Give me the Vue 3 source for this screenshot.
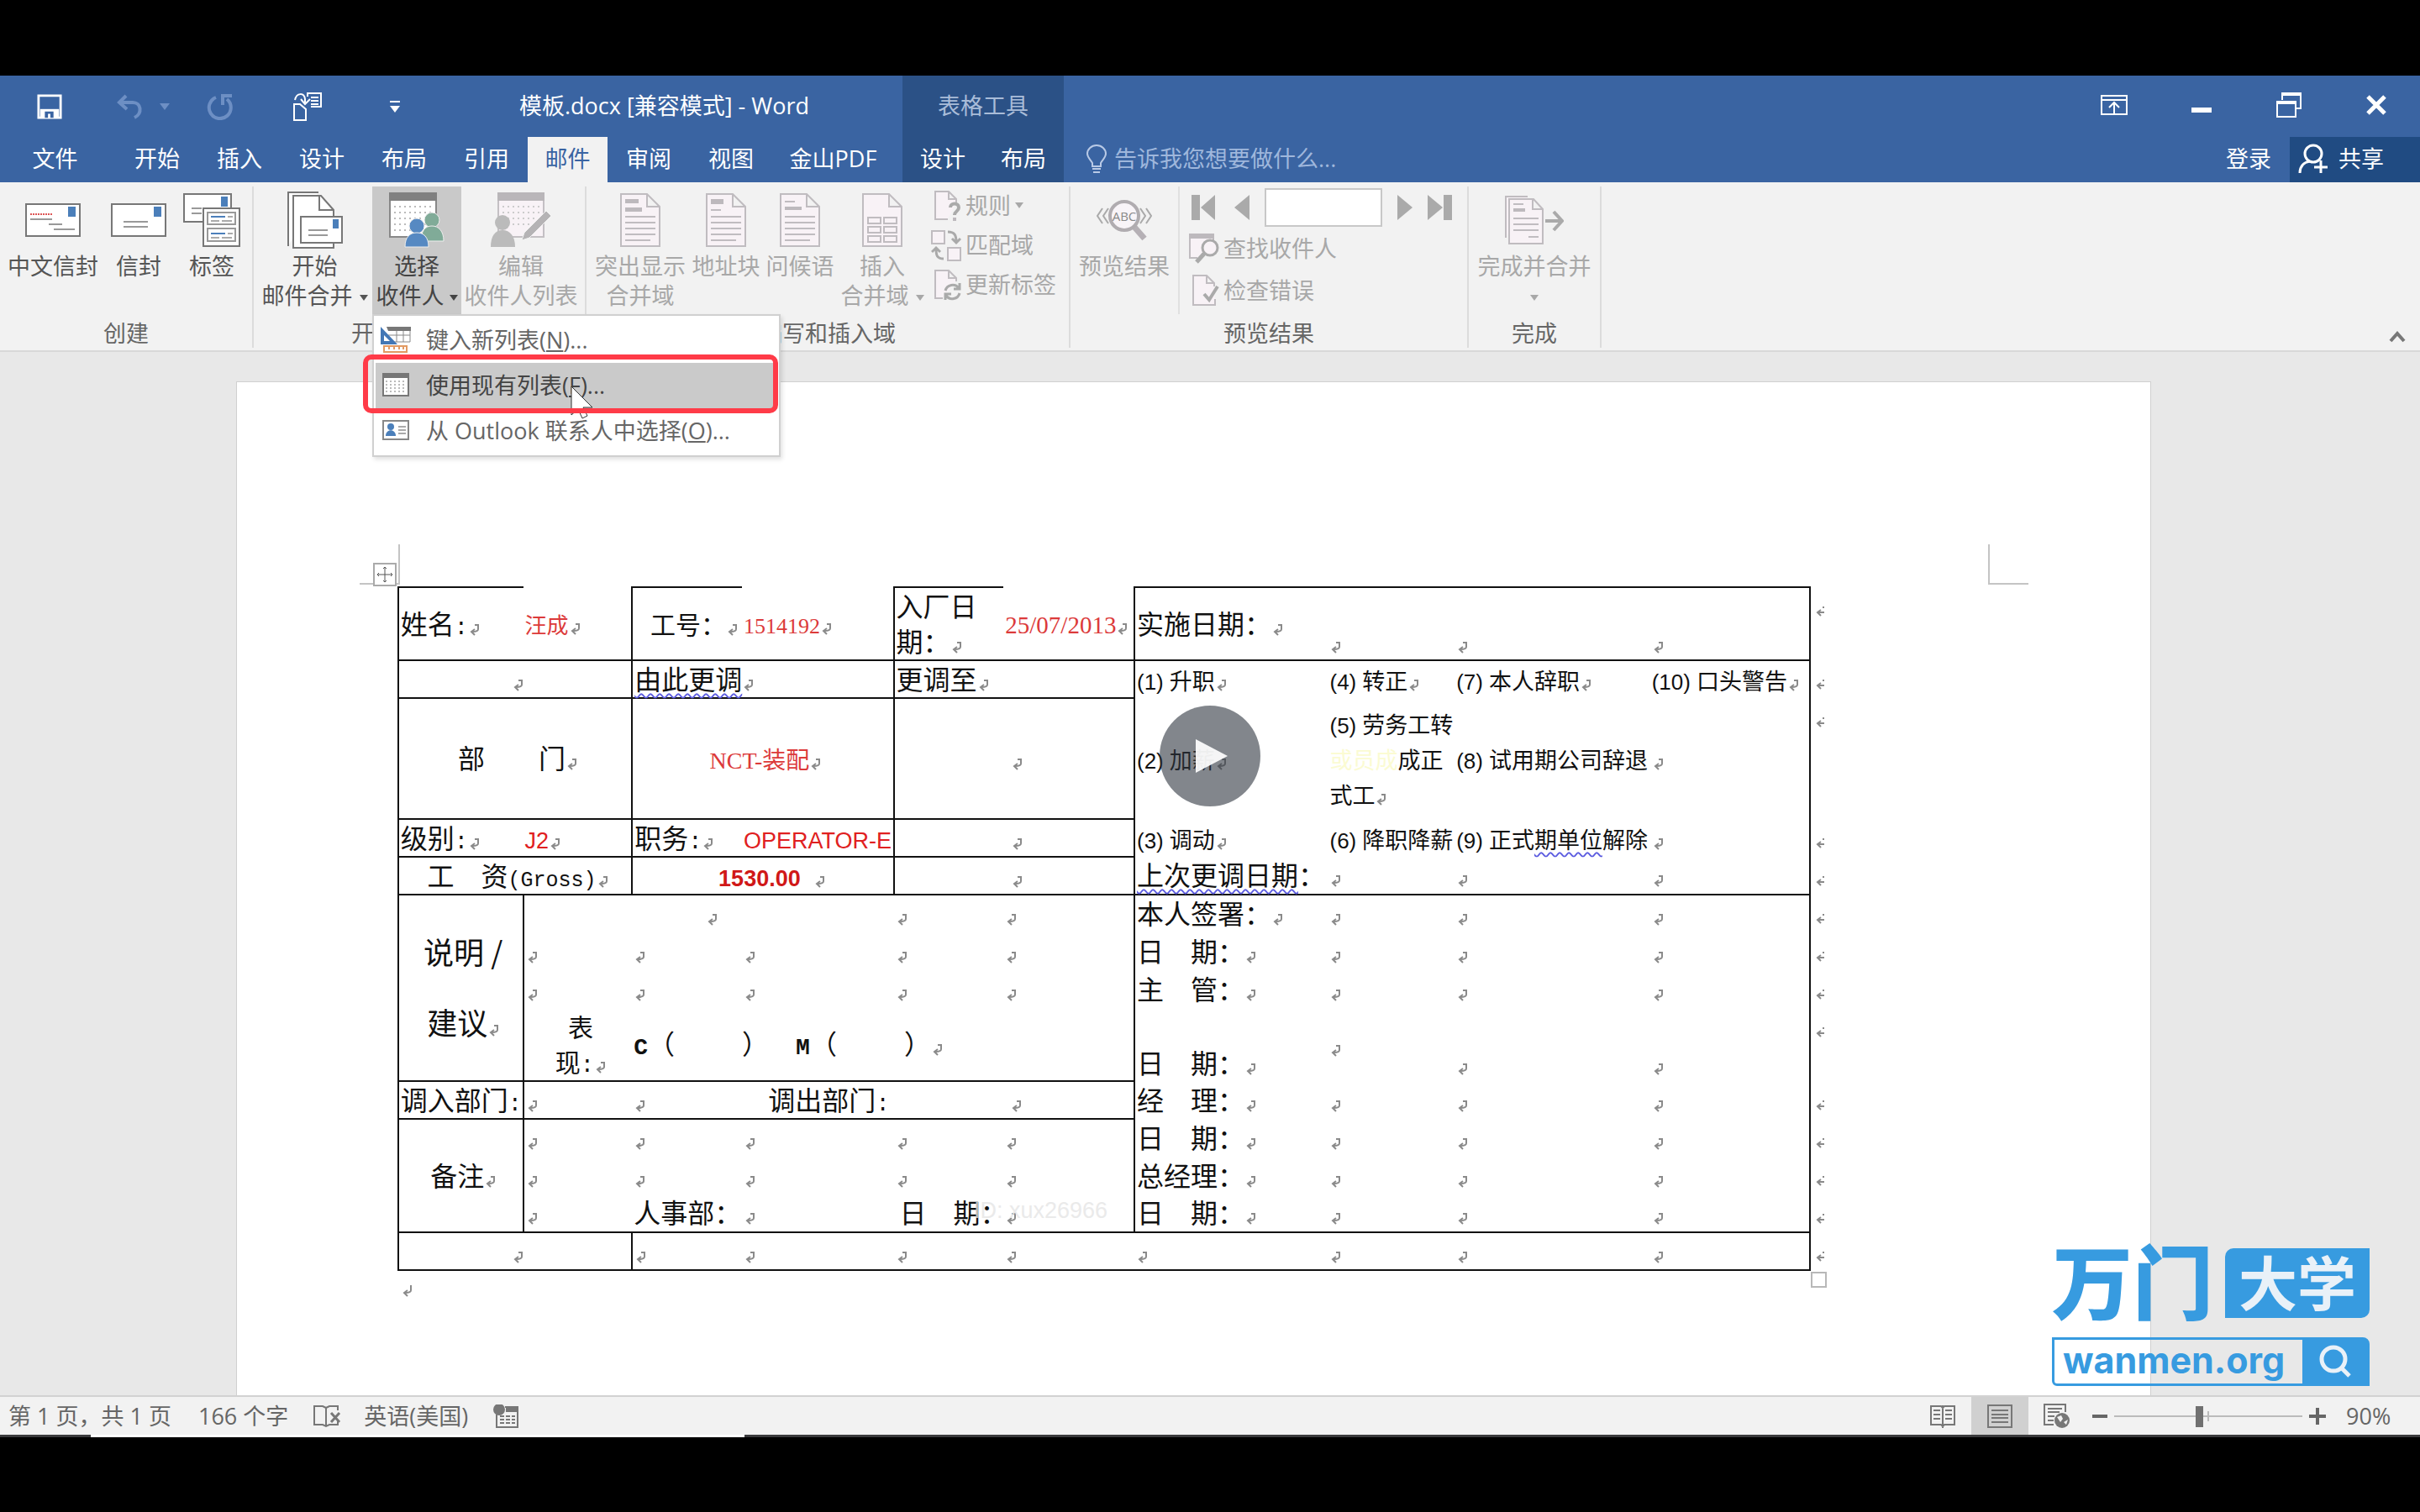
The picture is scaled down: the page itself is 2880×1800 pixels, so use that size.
<script setup>
import { ref } from 'vue'

const tabs = ['开始', '插入', '设计', '布局', '引用', '邮件', '审阅', '视图']
const record = ref('')
const zoom = ref(45)

const widths = [149, 130, 131, 181, 131, 156, 231, 151, 233, 191, 22]
const total = widths.reduce((a, b) => a + b, 0)
const cols = widths.map((w) => (w / total) * 100 + '%')

// A cell: lines of [text, style] runs, a paragraph mark unless hidden, and layout classes.
const cell = (lines, cls = '', opt = {}) => ({ lines, cls, span: 1, rows: 1, mark: true, ...opt })
const one = (text, cls, opt) => cell([[[text]]], cls, opt)
const blank = (cls = '', opt) => cell([[]], cls, opt)
const item = (n, text, cls = '', opt) => cell([[[`(${n})`, 'num'], [text, 'small']]], cls, opt)
const noMark = { mark: false }
const pair = { span: 2 }

const rows = [
  { h: 'h87', cells: [
    cell([[['姓名'], [':', 'half']]], 'bt bl bb'),
    cell([[['汪成', 'song']]], 'bb'),
    cell([[['工号：', 'mid']]], 'bt bl bb rt'),
    cell([[['1514192', 'song']]], 'bb'),
    cell([[['入厂日']], [['期：']]], 'bt bl bb'),
    cell([[['25/07/2013', 'date']]], 'bb'),
    one('实施日期：', 'bt bl bb'), blank('bt bb low'), blank('bt bb low'), blank('bt bb br low')
  ] },
  { h: 'h45', cells: [
    blank('bl bb ctr', pair),
    cell([[['由此更调', 'wave']]], 'bl bb', pair),
    one('更调至', 'bl bb', pair),
    item(1, '升职', 'bl'), item(4, '转正'), item(7, '本人辞职'), item(10, '口头警告', 'br')
  ] },
  { h: 'h144', cells: [
    one('部　　门', 'bl bb ctr', pair),
    cell([[['NCT-装配', 'dept']]], 'bl bb ctr', pair),
    blank('bl bb ctr', pair),
    item(2, '加薪', 'bl'),
    cell([[['(5)', 'num'], ['劳务工转', 'small']], [['或员成', 'small faint'], ['成正', 'small']], [['式工', 'small']]]),
    item(8, '试用期公司辞退', '', noMark), blank('br')
  ] },
  { h: 'h45', cells: [
    cell([[['级别'], [':', 'half']]], 'bl bb'),
    cell([[['J2', 'arial']]], 'bb'),
    cell([[['职务'], [':', 'half']]], 'bl bb'),
    cell([[['OPERATOR-E', 'arial']]], 'bb clip', noMark),
    blank('bl bb ctr', pair),
    item(3, '调动', 'bl'), item(6, '降职降薪', '', noMark),
    cell([[['(9)', 'num'], ['正式', 'small'], ['期单位', 'small wave'], ['解除', 'small']]], '', noMark), blank('br')
  ] },
  { h: 'h45', cells: [
    cell([[['工　资'], ['(Gross)', 'mono']]], 'bl bb ctr', pair),
    cell([[['  1530.00  ', 'arial bold']]], 'bl bb ctr', pair),
    blank('bl bb ctr', pair),
    cell([[['上次更调日期', 'wave'], ['：']]], 'bl bb', noMark), blank('bb'), blank('bb'), blank('bb br')
  ] },
  { h: 'h45', cells: [
    cell([[['说明 /', 'huge']], [['建议', 'huge']]], 'bl bb br ctr tall', { rows: 4 }),
    blank('ctr', { span: 3 }), blank(), blank(),
    one('本人签署：', 'bl'), blank(), blank(), blank('br')
  ] },
  { h: 'h45', cells: [blank(), blank(), blank(), blank(), blank(), one('日　期：', 'bl'), blank(), blank(), blank('br')] },
  { h: 'h45', cells: [blank(), blank(), blank(), blank(), blank(), one('主　管：', 'bl'), blank(), blank(), blank('br')] },
  { h: 'h87', cells: [
    cell([[['表', 'mid']], [['现', 'mid'], [':', 'half']]], 'bb ctr'),
    cell([[['C', 'heavy'], ['（\u2002\u2002\u2002\u2002\u2002）\u2002\u2002'], ['M', 'heavy'], ['（\u2002\u2002\u2002\u2002\u2002）']]], 'bb', { span: 4 }),
    one('日　期：', 'bl low'), blank(), blank('low'), blank('br low')
  ] },
  { h: 'h45', cells: [
    cell([[['调入部门'], [':', 'half']]], 'bl br bb', noMark),
    blank('bb'), blank('bb'),
    cell([[['调出部门'], [':', 'half']]], 'bb rt', noMark),
    blank('bb ctr', pair),
    one('经　理：', 'bl'), blank(), blank(), blank('br')
  ] },
  { h: 'h45', cells: [
    one('备注', 'bl br bb ctr', { rows: 3 }),
    blank(), blank(), blank(), blank(), blank(), one('日　期：', 'bl'), blank(), blank(), blank('br')
  ] },
  { h: 'h45', cells: [blank(), blank(), blank(), blank(), blank(), one('总经理：', 'bl'), blank(), blank(), blank('br')] },
  { h: 'h45', cells: [
    blank('bb'), one('人事部：', 'bb', noMark), blank('bb'), one('日　期：', 'bb inset', noMark), blank('bb'),
    one('日　期：', 'bl bb'), blank('bb'), blank('bb'), blank('bb br')
  ] },
  { h: 'h45', cells: [
    blank('bl bb ctr', pair), blank('bl bb'), blank('bb'), blank('bb'), blank('bb'), blank('bb'), blank('bb'), blank('bb'), blank('bb br')
  ] }
]
</script>

<template>
  <div class="stage">
    <div class="window">
      <header class="head">
        <div class="titlebar">
          <div class="quick">
            <button class="q q1" aria-label="保存"><svg width="30" height="30" viewBox="0 0 32 32"><path d="M2 2h28v28H2z" fill="none" stroke="#fff" stroke-width="3" /><path d="M4 19h24v11H4z" fill="#fff" /><path d="M10 22h11v8h-4v-5h-3v5h-4z" fill="#3a64a2" /></svg></button>
            <button class="q q2" aria-label="撤销"><svg width="34" height="32" viewBox="0 0 34 32"><path d="M12 3L4 11l9 8M4 11h16c10 0 12 13 2 18" fill="none" stroke="#6d8fc4" stroke-width="4" /></svg></button>
            <button class="q q3" aria-label="撤销选项"><svg width="12" height="8" viewBox="0 0 12 8"><path d="M0 0h12L6 8z" fill="#6d8fc4" /></svg></button>
            <button class="q q4" aria-label="重复"><svg width="32" height="32" viewBox="0 0 32 32"><path d="M11 5a13 13 0 1 0 13 2M19 14V3h11" fill="none" stroke="#6d8fc4" stroke-width="4" /></svg></button>
            <button class="q q5" aria-label="邮件合并"><svg width="36" height="36" viewBox="0 0 36 36" fill="none" stroke="#fff" stroke-width="2"><path d="M2 15h7l7 6v13H2zM3 10c2-9 11-9 12-1v4M10 9l5 6 6-6" /><path d="M18 6V2h16v16H22M22 7h9M22 11h9M22 15h9" /></svg></button>
            <button class="q q6" aria-label="自定义快速访问工具栏"><svg width="12" height="14" viewBox="0 0 12 14"><path d="M0 1h12" stroke="#fff" stroke-width="2" /><path d="M0 6h12L6 14z" fill="#fff" /></svg></button>
          </div>
          <h1 class="title">模板.docx [兼容模式] - Word</h1>
        </div>
        <div class="context">表格工具</div>
        <div class="controls">
          <button aria-label="功能区显示选项"><svg width="32" height="24" viewBox="0 0 32 24" fill="none" stroke="#fff" stroke-width="2"><path d="M1 1h30v22H1zM1 6h30M16 23V10M10 15l6-6 6 6" /></svg></button>
          <button aria-label="最小化"><svg width="24" height="24" viewBox="0 0 24 24"><path d="M0 15h24v6H0z" fill="#fff" /></svg></button>
          <button aria-label="还原"><svg width="30" height="30" viewBox="0 0 30 30"><path d="M7 9V1h22v18h-5M1 11h22v18H1z" fill="none" stroke="#fff" stroke-width="2" /><path d="M6 0h24v4H6zM0 10h24v4H0z" fill="#fff" /></svg></button>
          <button aria-label="关闭"><svg width="24" height="24" viewBox="0 0 24 24"><path d="M2 2l20 20M22 2L2 22" stroke="#fff" stroke-width="5" /></svg></button>
        </div>
        <nav class="tabs">
          <button class="tab file">文件</button>
          <button v-for="t in tabs" :key="t" class="tab" :class="{ active: t === '邮件' }">{{ t }}</button>
          <button class="tab wide">金山PDF</button>
        </nav>
        <nav class="tabs ctx">
          <button class="tab">设计</button>
          <button class="tab">布局</button>
        </nav>
        <div class="right">
          <label class="tell">
            <svg width="26" height="36" viewBox="0 0 26 36" fill="none" stroke="#b9cae6" stroke-width="2"><path d="M8 26v-4C5 17 2 15 2 11a11 10 0 0 1 22 0c0 4-3 6-6 11v4zM8 29h10M9 33h8" /></svg>
            <input type="text" placeholder="告诉我您想要做什么..." />
          </label>
          <button class="login">登录</button>
          <button class="share"><svg width="36" height="36" viewBox="0 0 36 36" fill="none" stroke="#fff" stroke-width="3"><ellipse cx="18" cy="12" rx="10" ry="10" /><path d="M2 35c0-8 5-13 12-14M27 20v15M19 28h16" /></svg>共享</button>
        </div>
      </header>

      <section class="ribbon">
        <div class="group g1">
          <div class="tools">
            <button class="big w126"><span class="ico"><svg width="66" height="40" viewBox="0 0 66 40"><path d="M1 1h64v38H1z" fill="#fff" stroke="#777" stroke-width="2" /><path d="M51 4h9v12h-9z" fill="#4b7fba" /><path d="M6 13h26" stroke="#d55" stroke-width="2" stroke-dasharray="2 1" /><path d="M6 19h26M28 25h16M34 31h25" stroke="#999" stroke-width="2" /></svg></span>中文信封</button>
            <button class="big w78"><span class="ico"><svg width="66" height="40" viewBox="0 0 66 40"><path d="M1 1h64v38H1z" fill="#fff" stroke="#777" stroke-width="2" /><path d="M51 4h9v12h-9z" fill="#4b7fba" /><path d="M15 22h29M15 28h29" stroke="#999" stroke-width="2" /></svg></span>信封</button>
            <button class="big w96"><span class="ico"><svg width="68" height="64" viewBox="0 0 68 64"><path d="M1 1h56v33H1z" fill="#fff" stroke="#777" stroke-width="2" /><path d="M45 4h8v12h-8z" fill="#4b7fba" /><path d="M10 18h12M10 24h12" stroke="#999" stroke-width="2" /><path d="M24 18h43v45H24z" fill="#fff" stroke="#777" stroke-width="2" /><path d="M29 23h33v14H29zM29 42h33v15H29z" fill="none" stroke="#999" stroke-width="2" /><path d="M33 28h17M33 48h17" stroke="#4b7fba" stroke-width="2" /><path d="M53 28h6M33 33h10M46 33h12M53 48h6M33 53h10M46 53h12" stroke="#aaa" stroke-width="2" /></svg></span>标签</button>
          </div>
          <div class="gname">创建</div>
        </div>
        <div class="group g2">
          <div class="tools">
            <button class="big w137"><span class="ico"><svg width="66" height="68" viewBox="0 0 66 68"><path d="M1 65V1h36" fill="#fff" stroke="#777" stroke-width="2" /><path d="M7 67V5h33l15 17v45z" fill="#fff" stroke="#777" stroke-width="2" /><path d="M38 5v17h17" fill="none" stroke="#777" stroke-width="2" /><path d="M16 30h49v31H16z" fill="#fff" stroke="#777" stroke-width="2" /><path d="M54 33h7v11h-7z" fill="#4b7fba" /><path d="M25 46h23M25 52h23" stroke="#999" stroke-width="2" /></svg></span>开始<span>邮件合并<i class="caret"></i></span></button>
            <button class="big w106 pressed"><span class="ico"><svg width="66" height="66" viewBox="0 0 66 66"><path d="M1 1h55v52H1z" fill="#fff" stroke="#888" stroke-width="2" /><path d="M0 0h57v10H0z" fill="#808080" /><path d="M6 17h46M6 24h46M6 31h46M6 38h46M6 45h30" stroke="#bbb" stroke-width="2" stroke-dasharray="2 4" /><g fill="#80ab98" stroke="#eee"><circle cx="51" cy="33" r="9" /><path d="M38 58c0-12 5-18 13-18s14 6 14 18z" /></g><g fill="#5689c2" stroke="#eee"><circle cx="33" cy="40" r="9" /><path d="M19 65c0-12 6-17 14-17s14 5 14 17z" /></g></svg></span>选择<span>收件人<i class="caret"></i></span></button>
            <button class="big w142" disabled><span class="ico"><svg width="72" height="66" viewBox="0 0 72 66"><path d="M9 1h54v52H9z" fill="#f8f2f6" stroke="#c4c0c4" stroke-width="2" /><path d="M8 0h56v10H8z" fill="#b9b6b9" /><path d="M14 17h46M14 24h46M14 31h40M14 38h36" stroke="#ccc" stroke-width="2" stroke-dasharray="2 4" /><circle cx="14" cy="36" r="9" fill="#bbb" /><path d="M0 65c0-13 5-20 14-20s15 7 15 20z" fill="#bbb" /><path d="M37 57l3-9 26-26 6 6-26 26z" fill="#b5b3b5" stroke="#f2f2f2" /></svg></span>编辑<span>收件人列表</span></button>
          </div>
          <div class="gname">开始邮件合并</div>
        </div>
        <div class="group g3">
          <div class="tools">
            <button class="big w120" disabled><span class="ico"><svg class="doc" width="48" height="64" viewBox="0 0 48 64"><path d="M1 1h31l15 15v47H1zM32 1v15h15" /><path d="M6 7h16v5H6zM6 17h20v5H6z" class="fill" /><path d="M6 28h36M6 35h36M6 42h36M6 49h36M6 56h30" /></svg></span>突出显示<span>合并域</span></button>
            <button class="big w84" disabled><span class="ico"><svg class="doc" width="48" height="64" viewBox="0 0 48 64"><path d="M1 1h31l15 15v47H1zM32 1v15h15" /><path d="M6 7h15v6H6z" class="fill" /><path d="M6 20h12M6 28h36M6 35h36M6 42h36M6 49h36M6 56h30" /></svg></span>地址块</button>
            <button class="big w92" disabled><span class="ico"><svg class="doc" width="48" height="64" viewBox="0 0 48 64"><path d="M1 1h31l15 15v47H1zM32 1v15h15" /><path d="M6 16h20v4H6z" class="fill" /><path d="M6 10h12M6 28h36M6 35h36M6 42h36M6 49h36M6 56h30" /></svg></span>问候语</button>
            <button class="big w104" disabled><span class="ico"><svg class="doc" width="48" height="64" viewBox="0 0 48 64"><path d="M1 1h31l15 15v47H1zM32 1v15h15" /><path d="M7 29h15v7H7zM26 29h15v7H26zM7 40h15v7H7zM26 40h15v7H26zM7 51h15v7H7zM26 51h15v7H26z" /></svg></span>插入<span>合并域<i class="caret"></i></span></button>
            <div class="stack">
              <button disabled><svg class="doc" width="36" height="38" viewBox="0 0 36 38"><path d="M20 35H5V2h16l9 9v4M21 2v9h9" /><path d="M23 21c0-6 10-6 10 0 0 5-5 4-5 9" fill="none" stroke="#aaa" stroke-width="4" /><path d="M26 33h4v4h-4z" class="fill" /></svg>规则<i class="caret"></i></button>
              <button disabled><svg class="doc" width="36" height="38" viewBox="0 0 36 38"><path d="M1 2h15v15H1zM20 22h15v15H20z" /><path d="M20 3c8 0 10 4 10 12M25 11l5 5 5-5M15 35c-8 0-9-4-9-12M1 27l5-5 5 5" fill="none" stroke="#aaa" stroke-width="3" /></svg>匹配域</button>
              <button disabled><svg class="doc" width="36" height="38" viewBox="0 0 36 38"><path d="M14 35H5V2h16l9 9v4M21 2v9h9" /><path d="M17 26a9 9 0 0 1 16-3M34 17v7h-7M34 29a9 9 0 0 1-16 3M17 37v-7h7" fill="none" stroke="#aaa" stroke-width="3" /></svg>更新标签</button>
            </div>
          </div>
          <div class="gname">编写和插入域</div>
        </div>
        <div class="group g4">
          <div class="tools">
            <button class="big w128" disabled><span class="ico"><svg width="68" height="50" viewBox="0 0 68 50"><path d="M44 31l14 16" stroke="#b5b0b5" stroke-width="7" /><circle cx="34" cy="20" r="17" fill="#f8f4f8" stroke="#b0acb0" stroke-width="4" /><text x="34" y="26" text-anchor="middle" font-size="15" fill="#888">ABC</text><path d="M8 11l-6 9 6 9M15 11l-6 9 6 9M60 11l6 9-6 9M53 11l6 9-6 9" fill="none" stroke="#aaa" stroke-width="2" /></svg></span>预览结果</button>
            <div class="stack nav">
              <div class="records">
                <button class="first" aria-label="首记录" disabled><svg width="29" height="30" viewBox="0 0 29 30"><path d="M0 0h10v30H0zM28 0v30L11 15z" fill="#aaa" /></svg></button>
                <button aria-label="上一记录" disabled><svg width="18" height="30" viewBox="0 0 18 30"><path d="M18 0v30L0 15z" fill="#aaa" /></svg></button>
                <input v-model="record" type="text" aria-label="记录" />
                <button aria-label="下一记录" disabled><svg width="18" height="30" viewBox="0 0 18 30"><path d="M0 0v30l18-15z" fill="#aaa" /></svg></button>
                <button aria-label="尾记录" disabled><svg width="29" height="30" viewBox="0 0 29 30"><path d="M19 0h10v30H19zM0 0v30l18-15z" fill="#aaa" /></svg></button>
              </div>
              <button disabled><svg class="doc" width="36" height="38" viewBox="0 0 36 38"><path d="M10 31H1V3h28v9" /><path d="M0 2h30v6H0z" class="fill" /><circle cx="25" cy="19" r="9" stroke="#aaa" stroke-width="3" /><path d="M18 26L9 36" stroke="#aaa" stroke-width="5" /></svg>查找收件人</button>
              <button disabled><svg class="doc" width="36" height="38" viewBox="0 0 36 38"><path d="M31 30v7H5V2h16l9 9v4M21 2v9h9" /><path d="M18 24l6 7 10-16" fill="none" stroke="#aaa" stroke-width="4" /></svg>检查错误</button>
            </div>
          </div>
          <div class="gname">预览结果</div>
        </div>
        <div class="group g5">
          <div class="tools">
            <button class="big w156" disabled><span class="ico"><svg class="doc" width="70" height="58" viewBox="0 0 70 58"><path d="M1 50V1h26" /><path d="M5 4h29l11 12v41H5zM33 4v12h12" /><path d="M10 15h14v4H10z" class="fill" /><path d="M10 10h12M10 27h30M10 34h30M10 41h30M28 49h12" /><path d="M48 30h19M58 19l10 11-10 11" fill="none" stroke="#aaa" stroke-width="4" /></svg></span>完成并合并<span class="only"><i class="caret"></i></span></button>
          </div>
          <div class="gname">完成</div>
        </div>
        <button class="collapse" aria-label="折叠功能区"><svg width="20" height="16" viewBox="0 0 20 16"><path d="M2 13l8-9 8 9" fill="none" stroke="#777" stroke-width="4" /></svg></button>

        <div class="popup">
          <ul class="menu">
            <li><button><svg width="36" height="32" viewBox="0 0 36 32"><path d="M9 2h26v17H12M9 11h26M19 4v15M27 4v15" fill="#fff" stroke="#888" stroke-width="1" /><path d="M7 1h29v5H9z" fill="#777" /><path d="M0 1l20 21H0z" fill="#4377b5" /><path d="M4 11l7 7H4z" fill="#fff" /><path d="M4 24h27v7H4z" fill="#fff" stroke="#e29a63" stroke-width="2" /><path d="M10 24v4M16 24v4M22 24v4M27 24v4" stroke="#e29a63" stroke-width="2" /></svg>键入新列表(<u>N</u>)...</button></li>
            <li><button class="hover"><svg width="36" height="32" viewBox="0 0 36 32"><path d="M3 3h30v26H3z" fill="#fff" stroke="#777" stroke-width="2" /><path d="M2 2h32v6H2z" fill="#777" /><path d="M6 12h25M6 16h25M6 20h25M6 24h25" stroke="#bbb" stroke-width="2" stroke-dasharray="2 3" /></svg>使用现有列表(<u>F</u>)...</button></li>
            <li><button><svg width="36" height="32" viewBox="0 0 36 32"><path d="M3 5h30v22H3z" fill="#fff" stroke="#888" stroke-width="2" /><circle cx="12" cy="12" r="4" fill="#4b7fba" /><path d="M6 23c0-9 12-9 12 0z" fill="#4b7fba" /><path d="M21 12h9M21 16h9M21 20h9" stroke="#aaa" stroke-width="2" /></svg>从 Outlook 联系人中选择(<u>O</u>)...</button></li>
          </ul>
          <svg class="pointer" width="30" height="42" viewBox="0 0 30 42"><path d="M2 2v34l8-7 5 11 6-3-5-10h11z" fill="#fff" stroke="#333" stroke-width="1" /></svg>
          <span class="ring"></span>
        </div>
      </section>

      <main class="desk">
        <article class="page">
          <div class="corners">
            <span class="corner left"><span class="handle"><svg width="20" height="20" viewBox="0 0 20 20"><path d="M10 1v18M1 10h18M8 3l2-2 2 2M8 17l2 2 2-2M3 8l-2 2 2 2M17 8l2 2-2 2" fill="none" stroke="#555" stroke-width="1" /></svg></span></span>
            <span class="corner end"></span>
          </div>
          <table>
            <colgroup><col v-for="(w, i) in cols" :key="i" :style="{ width: w }" /></colgroup>
            <tbody>
              <tr v-for="(r, ri) in rows" :key="ri" :class="r.h">
                <td v-for="(c, ci) in r.cells" :key="ci" :class="c.cls" :colspan="c.span" :rowspan="c.rows">
                  <div v-for="(line, li) in c.lines" :key="li" class="line"><span v-for="(seg, si) in line" :key="si" :class="seg[1]">{{ seg[0] }}</span><svg v-if="c.mark && li === c.lines.length - 1" class="mark" width="12" height="16" viewBox="0 0 12 16"><path d="M6 2h4v5c0 2-2 3-7 3M6 7l-4 3 4 4" /></svg></div>
                </td>
                <td class="endmark"><div class="line"><svg class="mark" width="12" height="16" viewBox="0 0 12 16"><path d="M10 10H3M6 7l-4 3 4 4M9 3v2" /></svg></div></td>
              </tr>
            </tbody>
          </table>
          <div class="after">
            <svg class="mark" width="12" height="16" viewBox="0 0 12 16"><path d="M10 1v6c0 2-2 3-7 3M6 7l-4 3 4 4" /></svg>
            <span class="grip"></span>
          </div>
          <span class="uid">ID: xux26966</span>
        </article>

        <div class="brand">
          <div class="row1"><strong>万门</strong><span>大学</span></div>
          <div class="row2"><span>wanmen.org</span><i><svg width="40" height="40" viewBox="0 0 40 40" fill="none" stroke="#e9f1f8" stroke-width="5"><circle cx="18" cy="17" r="14" /><path d="M27 27l10 10" /></svg></i></div>
        </div>
      </main>

      <footer class="status">
        <span>第 1 页，共 1 页</span>
        <span class="words">166 个字</span>
        <button aria-label="校对"><svg width="34" height="28" viewBox="0 0 34 28" fill="none" stroke="#777" stroke-width="2"><path d="M15 4v22M15 4l-4-2H1v22h10l4 2 4-2h10v-4M15 4l4-2h10v5" /><path d="M21 10l10 11M31 10L21 21" stroke-width="3" /></svg></button>
        <span class="lang">英语(美国)</span>
        <button aria-label="录制宏"><svg width="30" height="28" viewBox="0 0 30 28"><path d="M4 12v15h25V3H14" fill="none" stroke="#777" stroke-width="2" /><path d="M15 3h14v6H15z" fill="#777" /><circle cx="7" cy="6" r="7" fill="#777" /><path d="M8 14h18M8 18h18M8 22h18" stroke="#777" stroke-width="2" stroke-dasharray="5 2" /></svg></button>
        <div class="views">
          <button class="view" aria-label="阅读视图"><svg width="30" height="28" viewBox="0 0 30 28" fill="none" stroke="#777" stroke-width="2"><path d="M15 1v27M1 2h12l2 2 2-2h12v22H17l-2 2-2-2H1zM4 7h8M4 12h8M4 17h8M18 7h8M18 12h8M18 17h8" /></svg></button>
          <button class="view on" aria-label="页面视图"><svg width="30" height="28" viewBox="0 0 30 28" fill="none" stroke="#777" stroke-width="2"><path d="M1 1h28v26H1zM5 7h20M5 12h20M5 16h20M5 21h20" /></svg></button>
          <button class="view" aria-label="Web 版式视图"><svg width="32" height="30" viewBox="0 0 32 30"><path d="M12 25H1V1h25v9M5 6h17M5 10h14M5 15h8M5 20h7" fill="none" stroke="#777" stroke-width="2" /><circle cx="22" cy="20" r="9" fill="#777" /><path d="M16 16l5-2 2 4-3 4zM24 22l5-3-2 6z" fill="#f2f2f2" /></svg></button>
          <button class="step" aria-label="缩小"><svg width="18" height="20" viewBox="0 0 18 20"><path d="M0 10h18" stroke="#666" stroke-width="4" /></svg></button>
          <input v-model="zoom" class="slider" type="range" min="0" max="100" aria-label="缩放" />
          <button class="step" aria-label="放大"><svg width="20" height="20" viewBox="0 0 20 20"><path d="M0 10h20M10 0v20" stroke="#666" stroke-width="4" /></svg></button>
          <span class="pct">90%</span>
        </div>
      </footer>
      <div class="edge"><i></i></div>
      <button class="play" aria-label="播放"><svg width="38" height="40" viewBox="0 0 38 40"><path d="M0 0l38 20L0 40z" fill="#fff" fill-opacity=".92" /></svg></button>
    </div>
  </div>
</template>

<style>
body { margin: 0; background: #000; }
</style>

<style scoped>
* { box-sizing: border-box; }
.stage { min-height: 100vh; padding: 90px 0; background: #000; display: flex; font-family: "Open Sans", "Noto Sans CJK SC", sans-serif; font-size: 27px; line-height: 35px; color: #555; }
.window { flex: 1; min-width: 0; display: flex; flex-direction: column; position: relative; }
button { border: 0; background: none; padding: 0; margin: 0; font: inherit; color: inherit; }
button svg { display: block; }
input { font: inherit; margin: 0; }

.head { display: grid; grid-template-columns: 1074px 192px 1fr; grid-template-rows: 73px 54px; background: #3a64a2; color: #fff; }
.titlebar { display: flex; align-items: center; }
.quick { display: flex; align-items: center; width: 618px; }
.q { flex: none; }
.q1 { margin-left: 44px; } .q2 { margin-left: 64px; } .q3 { margin-left: 18px; }
.q4 { margin-left: 44px; } .q5 { margin-left: 70px; } .q6 { margin-left: 80px; }
.title { margin: 0; font: inherit; white-space: nowrap; padding-bottom: 3px; }
.context, .ctx { background: #2b5186; }
.context { display: flex; align-items: center; justify-content: center; color: #a9bcd8; padding-bottom: 3px; }
.controls { display: flex; justify-content: flex-end; padding-bottom: 4px; }
.controls button { width: 104px; display: flex; align-items: center; justify-content: center; }
.tabs { display: flex; }
.tab { width: 98px; padding-bottom: 3px; text-align: center; }
.file { width: 138px; padding-right: 7px; }
.wide { width: 155px; padding-right: 10px; white-space: nowrap; }
.ctx .tab { width: 96px; }
.tab.active { width: 95px; background: #f2f2f2; color: #3a64a2; }
.right { display: flex; align-items: stretch; }
.tell { display: flex; align-items: center; gap: 8px; padding-left: 26px; flex: 1; }
.tell input { flex: 1; border: 0; background: none; padding: 0 0 3px; color: #b9cae6; }
.tell input::placeholder { color: #9fb7dc; opacity: 1; }
.login { width: 98px; padding-bottom: 3px; }
.share { width: 155px; background: #204b82; display: flex; align-items: center; gap: 12px; padding: 0 0 3px 10px; }

.ribbon { position: relative; display: flex; height: 202px; background: #f2f2f2; border-bottom: 2px solid #d8d8d8; padding: 5px 0 3px; }
.group { display: flex; flex-direction: column; border-right: 2px solid #dcdcdc; }
.g1 { width: 302px; } .g2 { width: 396px; } .g3 { width: 576px; } .g4 { width: 474px; } .g5 { width: 158px; }
.tools { display: flex; flex: 1; align-items: flex-start; }
.g2 .tools, .g3 .tools { padding-left: 4px; }
.gname { height: 34px; line-height: 34px; text-align: center; color: #666; }
.big { display: flex; flex-direction: column; align-items: center; justify-content: flex-start; height: 152px; white-space: nowrap; flex: none; }
.ico { display: flex; align-items: center; justify-content: center; height: 77px; padding-top: 2px; }
.w126 { width: 126px; } .w78 { width: 78px; } .w96 { width: 96px; } .w137 { width: 137px; } .w106 { width: 106px; }
.w142 { width: 142px; } .w120 { width: 120px; } .w84 { width: 84px; } .w92 { width: 92px; } .w104 { width: 104px; }
.w128 { width: 130px; border-right: 2px solid #e0e0e0; } .w156 { width: 156px; }
.pressed { background: #c9c9c9; color: #444; }
button:disabled { color: #a8a8a8; }
.caret { display: inline-block; margin-left: 8px; vertical-align: 4px; border: 5px solid transparent; border-top: 7px solid currentColor; border-bottom: 0; }
.pressed .caret { margin-left: 6px; }
.only .caret, .stack .caret { margin-left: 0; }
.doc { fill: #f8f2f6; stroke: #c0bcc0; stroke-width: 2; }
.doc .fill { fill: #bdb9bd; stroke: none; }
.stack { display: flex; flex-direction: column; padding: 0 0 0 6px; }
.stack > button { display: flex; align-items: center; gap: 5px; height: 47px; padding-bottom: 2px; text-align: left; white-space: nowrap; }
.nav { padding: 1px 0 0 11px; }
.nav > button { height: 50px; }
.records { display: flex; align-items: center; height: 48px; gap: 18px; }
.records .first { margin: 0 4px 0 3px; }
.records input { width: 140px; height: 46px; border: 2px solid #c8c8c8; background: #fff; }
.collapse { margin: auto 17px 5px auto; }

.popup { position: absolute; z-index: 3; left: 443px; top: 157px; width: 486px; }
.menu { margin: 0; padding: 2px; list-style: none; background: #fff; border: 2px solid #d0d0d0; box-shadow: 2px 3px 5px rgba(0, 0, 0, .12); color: #666; }
.menu li { height: 54px; }
.menu button { display: flex; align-items: center; width: 100%; height: 54px; padding: 0 0 2px 6px; white-space: pre; }
.menu button svg { margin-right: 18px; flex: none; }
.menu .hover { background: #cacaca; color: #444; }
.ring { position: absolute; left: -11px; top: 48px; width: 494px; height: 70px; border: 6px solid #ff3b48; border-radius: 10px; }
.pointer { position: absolute; left: 235px; top: 84px; }

.desk { position: relative; flex: 1; display: grid; grid-template-columns: 281fr 2279fr 320fr; background: #e8e8e8; padding-top: 35px; }
.page { position: relative; grid-column: 2; display: grid; grid-template-columns: 191fr 1706fr 382fr; align-content: start; background: #fff; border: 1px solid #d0d0d0; border-bottom: 0; color: #111; }
.corners { grid-column: 1 / -1; height: 243px; display: flex; justify-content: space-between; align-items: flex-end; padding: 0 6% 2px 6%; }
.corner { position: relative; width: 48px; height: 48px; border-bottom: 2px solid #c4c4c4; }
.left { border-right: 2px solid #c4c4c4; margin-left: 9px; }
.end { border-left: 2px solid #c4c4c4; margin-right: 8px; }
.handle { position: absolute; right: 2px; bottom: -4px; width: 28px; height: 28px; border: 2px solid #aaa; background: #fff; display: flex; align-items: center; justify-content: center; }

table { grid-column: 2; width: 100%; table-layout: fixed; border-collapse: collapse; font-size: 32px; font-family: "Noto Sans CJK SC", sans-serif; }
td { padding: 0 0 0 2px; vertical-align: middle; text-align: left; }
.h45 { height: 45px; } .h87 { height: 87px; } .h144 { height: 144px; }
.line { height: 42px; line-height: 38px; white-space: pre; }
.ctr { text-align: center; padding-left: 6px; }
.rt { text-align: right; padding-right: 5px; }
.inset { padding-left: 7px; }
.low { vertical-align: bottom; }
.clip .line { overflow: hidden; }
.tall .line { height: 84px; line-height: 80px; }
.bt { border-top: 2px solid #111; }
.bl { border-left: 2px solid #111; }
.br { border-right: 2px solid #111; }
.bb { border-bottom: 2px solid #111; }
.endmark { vertical-align: top; padding-left: 4px; }
.mark { fill: none; stroke: #8a8a8a; stroke-width: 2; margin-left: 2px; vertical-align: -3px; flex: none; }
.small { font-size: 27px; }
.mid { font-size: 30px; }
.huge { font-size: 36px; }
.num { font-family: "Liberation Sans", sans-serif; font-size: 26px; margin-right: 7px; }
.mono, .half, .heavy { font-family: "Liberation Mono", monospace; }
.mono { font-size: 25px; }
.half { font-size: 27px; }
.heavy { font-size: 28px; font-weight: bold; }
.song { font-family: "Liberation Serif", "Noto Sans CJK SC", serif; font-size: 26px; color: #dc3a3a; }
.date { font-family: "Liberation Serif", serif; font-size: 29px; color: #dc3a3a; }
.dept { font-family: "Liberation Serif", "Noto Sans CJK SC", serif; font-size: 28px; color: #dc3a3a; }
.arial { font-family: "Liberation Sans", sans-serif; font-size: 27px; color: #e02020; }
.bold { font-weight: bold; color: #d01818; }
.faint { color: #fbfbd2; }
.wave { text-decoration: underline wavy #5c5ce0 2px; text-underline-offset: 4px; }
.after { grid-column: 2; display: flex; justify-content: space-between; align-items: flex-start; padding: 0 3px 0 4px; }
.after .mark { margin-top: 16px; }
.grip { width: 19px; height: 19px; border: 2px solid #b8b8b8; background: #fff; margin-top: 1px; }
.uid { position: absolute; left: 877px; top: 969px; font-family: "Liberation Sans", sans-serif; font-size: 27px; color: #e6e6e6; opacity: .8; }

.play { position: absolute; left: 50%; top: 50%; width: 120px; height: 120px; margin: -60px 0 0 -60px; border-radius: 50%; background: rgba(47, 54, 64, .6); display: flex; align-items: center; justify-content: center; padding-left: 4px; }

.brand { position: absolute; right: 60px; bottom: 11px; width: 378px; color: #379be0; font-family: "Noto Sans CJK SC", sans-serif; }
.row1 { display: flex; height: 83px; justify-content: space-between; }
.row1 strong { font-size: 96px; line-height: 72px; font-weight: 900; }
.row1 span { width: 172px; background: #379be0; color: #e9f1f8; border-radius: 10px 0 10px 0; font-size: 70px; line-height: 78px; font-weight: 700; text-align: center; }
.row2 { display: flex; margin-top: 23px; height: 58px; border: 3px solid #379be0; border-radius: 0 8px 0 6px; }
.row2 span { flex: 1; padding-left: 10px; font-family: Inter, sans-serif; font-weight: 700; font-size: 43px; line-height: 48px; }
.row2 i { width: 77px; background: #379be0; display: flex; align-items: center; justify-content: center; }

.status { display: flex; align-items: center; height: 48px; background: #f2f2f2; border-top: 2px solid #d2d2d2; padding-left: 10px; color: #666; white-space: pre; }
.status > span { padding-bottom: 2px; }
.words { margin-left: 32px; }
.status > button { margin-left: 30px; }
.lang { margin-left: 26px; }
.views { margin-left: auto; display: flex; align-items: center; height: 100%; }
.view { width: 68px; height: 100%; display: flex; align-items: center; justify-content: center; }
.on { background: #d0d0d0; }
.step { margin: 0 8px; }
.slider { appearance: none; width: 224px; height: 26px; background: linear-gradient(#bbb, #bbb) center / 100% 2px no-repeat, linear-gradient(#bbb, #bbb) center / 2px 12px no-repeat; }
.slider::-webkit-slider-thumb { appearance: none; width: 9px; height: 25px; background: #707070; border-radius: 0; }
.pct { width: 88px; margin-left: 16px; padding-bottom: 2px; }
.edge { height: 3px; margin-top: -1px; margin-bottom: -1px; background: #3a3a3c; display: flex; }
.edge i { width: 27%; margin-left: 108px; background: #fff; }
</style>
